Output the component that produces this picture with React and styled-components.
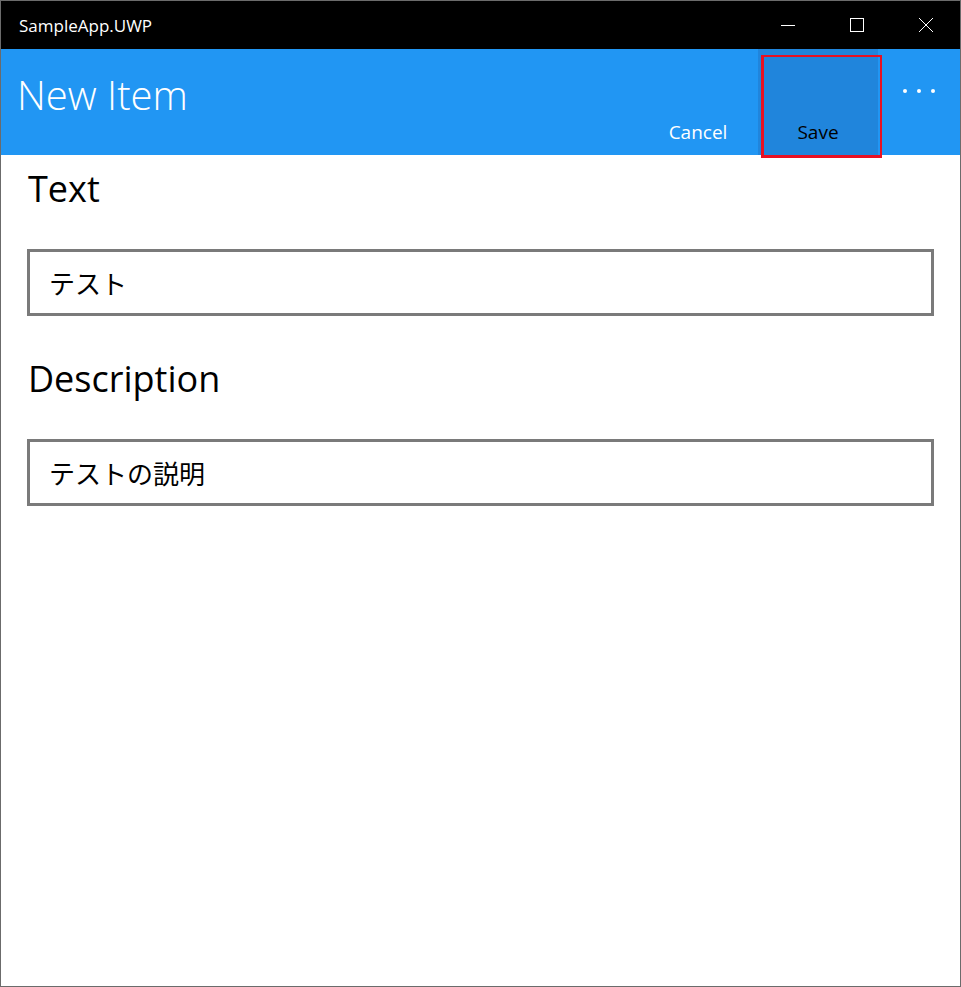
import React from "react";
import styled, { createGlobalStyle } from "styled-components";

const GlobalStyle = createGlobalStyle`
  html, body {
    margin: 0;
    padding: 0;
    background: #ffffff;
  }
  * {
    box-sizing: border-box;
  }
`;

const FONT = `"Open Sans", "Noto Sans CJK JP", sans-serif`;

export default function App() {
  return (
    <Window>
      <GlobalStyle />
      <TitleBar>
        <AppName>SampleApp.UWP</AppName>
        <Controls>
          <ControlButton aria-label="minimize">
            <svg width="16" height="16" viewBox="0 0 16 16">
              <line x1="1" y1="8.5" x2="15" y2="8.5" stroke="#fff" strokeWidth="1" />
            </svg>
          </ControlButton>
          <ControlButton aria-label="maximize">
            <svg width="16" height="16" viewBox="0 0 16 16">
              <rect x="1.5" y="1.5" width="13" height="13" fill="none" stroke="#fff" strokeWidth="1" />
            </svg>
          </ControlButton>
          <ControlButton aria-label="close">
            <svg width="16" height="16" viewBox="0 0 16 16">
              <path d="M1 1 L15 15 M15 1 L1 15" stroke="#fff" strokeWidth="1" />
            </svg>
          </ControlButton>
        </Controls>
      </TitleBar>

      <Header>
        <PageTitle>New Item</PageTitle>
        <CommandBar>
          <AppBarButton>Cancel</AppBarButton>
          <AppBarButton hovered>
            Save
            <Highlight />
          </AppBarButton>
          <MoreButton aria-label="more">
            <Dot />
            <Dot />
            <Dot />
          </MoreButton>
        </CommandBar>
      </Header>

      <Form>
        <FieldLabel>Text</FieldLabel>
        <TextBox>テスト</TextBox>
        <FieldLabel>Description</FieldLabel>
        <TextBox>テストの説明</TextBox>
      </Form>
    </Window>
  );
}

const Window = styled.div`
  width: 961px;
  height: 987px;
  border: 1px solid #6b6b6b;
  display: flex;
  flex-direction: column;
  background: #ffffff;
  font-family: ${FONT};
  overflow: hidden;
`;

const TitleBar = styled.div`
  flex: none;
  height: 49px;
  margin-top: -1px;
  background: #000000;
  display: flex;
  align-items: center;
  justify-content: space-between;
  color: #ffffff;
`;

const AppName = styled.div`
  padding-left: 18px;
  font-size: 17px;
  line-height: 22px;
  margin-top: 2px;
`;

const Controls = styled.div`
  display: flex;
  height: 100%;
`;

const ControlButton = styled.div`
  width: 69px;
  height: 100%;
  display: flex;
  align-items: center;
  justify-content: center;
`;

const Header = styled.div`
  flex: none;
  height: 106px;
  background: #2196f3;
  display: flex;
  justify-content: space-between;
`;

const PageTitle = styled.div`
  padding: 20px 0 0 16px;
  font-size: 40px;
  font-weight: 300;
  color: #ffffff;
  line-height: 52px;
`;

const CommandBar = styled.div`
  display: flex;
  height: 100%;
`;

const AppBarButton = styled.div`
  position: relative;
  width: 120px;
  height: 100%;
  display: flex;
  align-items: flex-end;
  justify-content: center;
  padding-bottom: 10px;
  font-size: 19px;
  line-height: 26px;
  color: ${(p) => (p.hovered ? "#000000" : "#ffffff")};
  background: ${(p) => (p.hovered ? "#2085dc" : "transparent")};
`;

const Highlight = styled.div`
  position: absolute;
  left: 3px;
  top: 6px;
  width: 121px;
  height: 103px;
  border: 3px solid #e81123;
  border-width: 2px 2px 3px 3px;
`;

const MoreButton = styled.div`
  width: 82px;
  height: 100%;
  display: flex;
  justify-content: center;
  gap: 10px;
  padding-top: 40px;
`;

const Dot = styled.span`
  width: 4px;
  height: 4px;
  border-radius: 50%;
  background: #ffffff;
`;

const Form = styled.div`
  display: flex;
  flex-direction: column;
  padding: 12px 26px 0 26px;
`;

const FieldLabel = styled.div`
  font-size: 36px;
  line-height: 44px;
  color: #000000;
  margin-bottom: 38px;
  padding-left: 1px;
`;

const TextBox = styled.div`
  height: 67px;
  border: 3px solid #7a7a7a;
  display: flex;
  align-items: center;
  padding-left: 19px;
  font-size: 26px;
  color: #000000;
  margin-bottom: 41px;
  font-family: "Noto Sans CJK JP", sans-serif;
`;
